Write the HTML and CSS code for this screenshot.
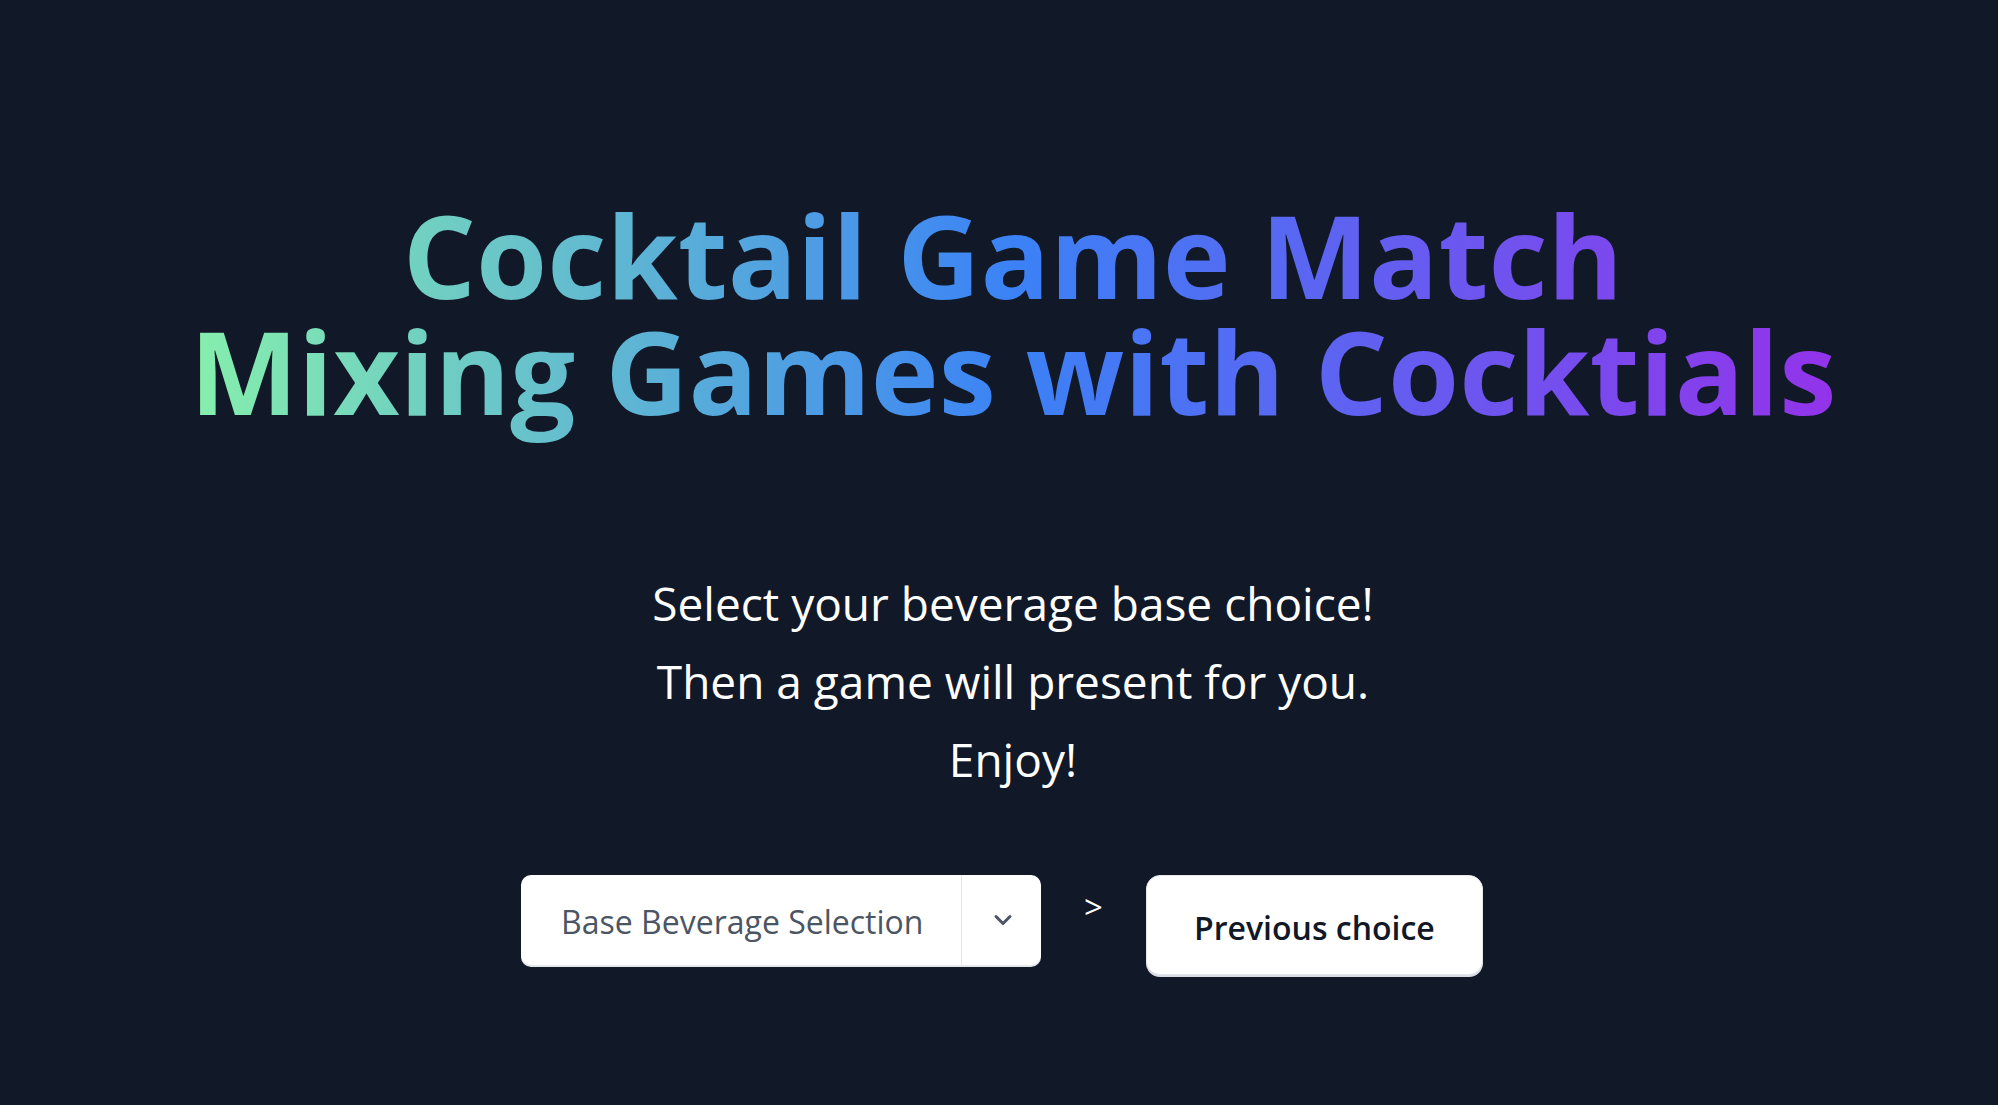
FILE: index.html
```html
<!DOCTYPE html>
<html lang="en">
<head>
<meta charset="utf-8">
<title>Cocktail Game Match</title>
<link rel="stylesheet" href="styles.css">
</head>
<body>
<main class="page">
  <section class="intro">
    <h1 class="title"><span class="title-line">Cocktail Game Match</span><span class="title-line">Mixing Games with Cocktials</span></h1>
    <div class="lead">
      <p class="lead-line">Select your beverage base choice!</p>
      <p class="lead-line">Then a game will present for you.</p>
      <p class="lead-line">Enjoy!</p>
    </div>
  </section>
  <div class="controls">
    <div class="select">
      <span class="select-label">Base Beverage Selection</span>
      <span class="select-arrow">
        <svg class="chevron" width="20" height="14" viewBox="0 0 20 14" aria-hidden="true"><path d="M3 3.5 L10 10.5 L17 3.5" fill="none" stroke="#4b5563" stroke-width="3" stroke-linecap="round" stroke-linejoin="round"/></svg>
      </span>
    </div>
    <span class="arrow">&gt;</span>
    <button class="prev-btn" type="button">Previous choice</button>
  </div>
</main>
</body>
</html>
```
FILE: styles.css
```css
html, body {
  margin: 0;
  padding: 0;
}
body {
  background: #111827;
  min-height: 100vh;
  font-family: "Open Sans", "Noto Sans", sans-serif;
  color: #ffffff;
}
.page {
  display: flex;
  flex-direction: column;
  align-items: center;
  padding-top: 197px;
}
.intro {
  display: flex;
  flex-direction: column;
  align-items: center;
  padding-left: 28px;
}
.title {
  display: flex;
  flex-direction: column;
  align-items: center;
  margin: 0;
  padding-bottom: 32px;
  font-size: 115px;
  line-height: 116px;
  font-weight: 700;
  text-align: center;
  background: linear-gradient(to right, #86efac, #3b82f6, #9333ea);
  -webkit-background-clip: text;
  background-clip: text;
  color: transparent;
}
.title-line {
  display: block;
  white-space: nowrap;
}
.lead {
  margin-top: 103px;
  text-align: center;
}
.lead-line {
  margin: 0;
  font-size: 46px;
  line-height: 78px;
  font-weight: 400;
  color: #ffffff;
}
.controls {
  display: flex;
  align-items: flex-start;
  gap: 43px;
  margin-top: 77px;
  padding-left: 6px;
}
.select {
  display: flex;
  align-items: stretch;
  width: 520px;
  height: 90px;
  box-sizing: border-box;
  background: #ffffff;
  border-radius: 10px;
  box-shadow: 0 2px 0 #e5e7eb;
}
.select-label {
  flex: 1;
  display: flex;
  align-items: center;
  padding: 3px 0 0 40px;
  font-size: 32px;
  color: #4b5563;
}
.select-arrow {
  width: 79px;
  display: flex;
  align-items: center;
  justify-content: center;
  border-left: 1px solid #e5e7eb;
}
.chevron {
  display: block;
  margin-left: 3px;
}
.arrow {
  margin-top: 9px;
  font-size: 33px;
  color: #ffffff;
}
.prev-btn {
  width: 337px;
  height: 100px;
  box-sizing: border-box;
  background: #ffffff;
  border: 1px solid #e5e7eb;
  border-radius: 14px;
  box-shadow: 0 2px 0 #d9dce1;
  font-family: "Open Sans", "Noto Sans", sans-serif;
  font-size: 32px;
  font-weight: 600;
  color: #111827;
  padding: 4px 0 0;
  cursor: pointer;
}
```
